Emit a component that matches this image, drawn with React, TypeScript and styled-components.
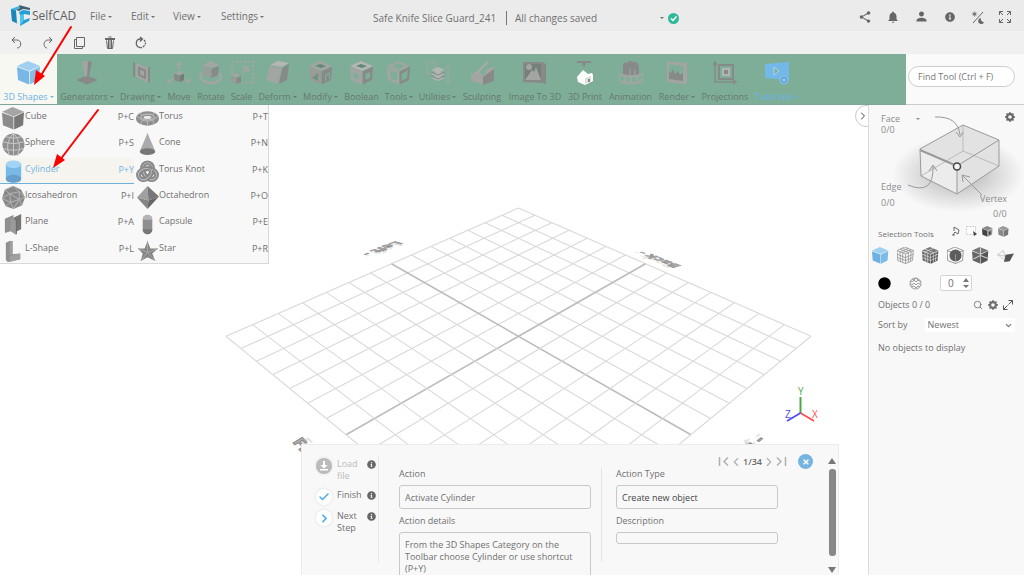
import React from "react";
import styled, { createGlobalStyle } from "styled-components";
import { MdShare, MdNotifications, MdPerson } from "react-icons/md";
import { FaInfoCircle, FaTimes } from "react-icons/fa";
import { BsGearFill } from "react-icons/bs";
import { Search, ChevronDown, ChevronLeft, ChevronRight, Check } from "lucide-react";

const GlobalStyle = createGlobalStyle`
  * { box-sizing: border-box; }
  body {
    margin: 0;
    background: #fff;
    color: #707070;
    font: 9px/12px "Open Sans", "Noto Sans", sans-serif;
  }
  button, input, select, textarea { font: inherit; color: inherit; margin: 0; }
  button { background: none; border: 0; padding: 0; cursor: pointer; }
  svg { display: block; flex: none; }
`;

const Page = styled.div`
  position: relative;
  min-height: 100vh;
  display: flex;
  flex-direction: column;
  overflow: hidden;
`;

const Caret = styled.span`
  display: inline-block;
  border: 2px solid transparent;
  border-top-color: currentColor;
  border-bottom: 0;
  margin-left: 2px;
  vertical-align: 2px;
`;

/* ---------- header ---------- */

const Header = styled.header`
  height: 31px;
  display: grid;
  grid-template-columns: 373px 1fr auto;
  background: #ebebeb;
  font-size: 10px;
  line-height: 14px;
`;

const MenuBar = styled.nav`
  display: flex;
  align-items: center;
  padding-left: 11px;
`;

const Logo = styled.a`
  display: flex;
  align-items: center;
  gap: 2px;
  width: 79px;
  color: #5f5f5f;
  font-size: 12px;
  text-decoration: none;
`;

const MenuButton = styled.button<{ $w: number }>`
  width: ${(p) => p.$w}px;
  text-align: left;
  white-space: nowrap;
`;

const Title = styled.div`
  display: flex;
  align-items: center;
  padding-top: 5px;
  white-space: nowrap;
`;

const ProjectName = styled.span`
  width: 134px;
  border-right: 1px solid #777;
`;

const SaveState = styled.button`
  display: flex;
  align-items: center;
  justify-content: space-between;
  width: 157px;
  padding-left: 8px;
  margin-right: 4px;
`;

const HeaderIcons = styled.div`
  display: flex;
  align-items: center;
  gap: 14px;
  padding: 2px 13px 0 0;
  color: #666;
`;

const InfoButton = styled.button`
  padding: 0 2px;
`;

const QuickBar = styled.div`
  height: 23px;
  display: flex;
  align-items: center;
  gap: 17px;
  padding-left: 10px;
  background: #f0f0f0;
  color: #666;
`;

/* ---------- ribbon ---------- */

const Ribbon = styled.div`
  height: 51px;
  display: flex;
  background: #7fae98;
  border-bottom: 1px solid #7aa893;
`;

const Tool = styled.button<{ $w: number; $active?: boolean; $blue?: boolean }>`
  width: ${(p) => p.$w}px;
  display: flex;
  flex-direction: column;
  align-items: center;
  gap: 6px;
  padding-top: 7px;
  white-space: nowrap;
  color: ${(p) => (p.$active ? "#70b2e2" : p.$blue ? "#64b2ea" : "#66786f")};
  background: ${(p) => (p.$active ? "#f8f8f3" : "transparent")};
`;

const FinderBox = styled.div`
  margin: 0 0 -1px auto;
  width: 118px;
  padding: 12px 9px 0 2px;
  background: #fafafa;
  border-bottom: 1px solid #ccc;
`;

const Finder = styled.input`
  width: 100%;
  height: 21px;
  padding: 0 9px;
  background: #fff;
  border: 1px solid #ccc;
  border-radius: 11px;
  &::placeholder { color: #777; opacity: 1; }
`;

/* ---------- workspace ---------- */

const Workspace = styled.main`
  flex: 1;
  display: grid;
  grid-template-columns: 1fr 156px;
`;

const Viewport = styled.section`
  position: relative;
  overflow: hidden;
  background: #fff;
`;

const Scene = styled.svg`
  width: 100%;
  height: 100%;
  position: absolute;
  inset: 0;
`;

const ShapeMenu = styled.div`
  position: absolute;
  left: 0;
  top: -1px;
  width: 269px;
  height: 160px;
  display: grid;
  grid-template-columns: 134px 134px;
  grid-template-rows: repeat(6, 1fr);
  grid-auto-flow: column;
  background: #f8f8f8;
  border: 1px solid #d9d9d9;
  border-left: 0;
`;

const ShapeItem = styled.button<{ $active?: boolean }>`
  display: flex;
  align-items: flex-start;
  padding: 2px 0 0 2px;
  text-align: left;
  color: ${(p) => (p.$active ? "#76b4e2" : "#707070")};
  background: ${(p) => (p.$active ? "#f5f4ef" : "transparent")};
  box-shadow: ${(p) => (p.$active ? "inset 0 -1px #6fb0dd" : "none")};
`;

const ShapeName = styled.span`
  flex: 1;
  padding-top: 3px;
`;

const Shortcut = styled.span`
  padding-top: 4px;
`;

const Collapse = styled.button`
  position: absolute;
  right: -10px;
  top: 0;
  width: 23px;
  height: 22px;
  padding-left: 1px;
  border: 1px solid #ccc;
  border-radius: 11px;
  background: #fff;
  color: #444;
`;

/* ---------- lesson panel ---------- */

const Lesson = styled.section`
  position: absolute;
  left: 301px;
  right: 29px;
  bottom: 0;
  height: 131px;
  display: flex;
  padding-left: 14px;
  overflow: hidden;
  background: #f8f8f8;
  border: 1px solid #ececec;
  border-bottom: 0;
`;

const Steps = styled.div`
  width: 63px;
  height: 107px;
  margin-top: 10px;
  padding-top: 3px;
  display: flex;
  flex-direction: column;
  gap: 5px;
  border-right: 1px solid #e8e8e8;
`;

const Step = styled.button<{ $muted?: boolean }>`
  display: grid;
  grid-template-columns: 16px 25px 10px;
  column-gap: 5px;
  align-items: start;
  min-height: ${(p) => (p.$muted ? 26 : 16)}px;
  text-align: left;
  color: ${(p) => (p.$muted ? "#bbb" : "#707070")};
  & > svg { margin-top: 2px; color: #666; }
`;

const Round = styled.span<{ $fill?: string }>`
  width: 16px;
  height: 16px;
  display: grid;
  place-items: center;
  border-radius: 50%;
  color: ${(p) => (p.$fill ? "#fff" : "#4aa8e6")};
  background: ${(p) => p.$fill || "#fff"};
  box-shadow: 0 0 3px #ddd;
`;

const Column = styled.div<{ $w: number; $left: number }>`
  width: ${(p) => p.$w}px;
  margin: 23px 0 0 ${(p) => p.$left}px;
  display: flex;
  flex-direction: column;
`;

const Field = styled.label`
  display: flex;
  flex-direction: column;
  gap: 5px;
  margin-bottom: 6px;
`;

const TextBox = styled.input<{ $h: number; $strong?: boolean }>`
  width: 100%;
  height: ${(p) => p.$h}px;
  padding: 0 5px;
  background: transparent;
  border: 1px solid #c8c8c8;
  border-radius: 3px;
  font-weight: ${(p) => (p.$strong ? 500 : 400)};
  color: ${(p) => (p.$strong ? "#444" : "#707070")};
`;

const Details = styled.textarea`
  width: 100%;
  height: 54px;
  padding: 6px 5px;
  resize: none;
  overflow: hidden;
  background: transparent;
  border: 1px solid #c8c8c8;
  border-radius: 3px;
`;

const Divider = styled.div`
  width: 1px;
  height: 95px;
  margin: 22px 0 0 10px;
  background: #e4e4e4;
`;

const Pager = styled.div`
  position: absolute;
  right: 25px;
  top: 9px;
  display: flex;
  align-items: center;
  color: #b0b0b0;
`;

const PageCount = styled.span`
  font-weight: 600;
  color: #6a6a6a;
`;

const Close = styled.button`
  width: 15px;
  height: 15px;
  margin-left: 11px;
  display: grid;
  place-items: center;
  border-radius: 50%;
  color: #fff;
  background: #76b4e2;
`;

const ScrollTrack = styled.div`
  position: absolute;
  right: 2px;
  top: 13px;
  bottom: 0;
  width: 8px;
  display: flex;
  flex-direction: column;
  align-items: center;
  gap: 5px;
`;

const Thumb = styled.div`
  width: 7px;
  height: 87px;
  margin-bottom: 6px;
  border-radius: 3px;
  background: #888;
`;

const Triangle = styled.span<{ $down?: boolean }>`
  border: 4px solid transparent;
  border-${(p) => (p.$down ? "top" : "bottom")}: 6px solid #777;
  border-${(p) => (p.$down ? "bottom" : "top")}: 0;
`;

/* ---------- sidebar ---------- */

const Sidebar = styled.aside`
  display: flex;
  flex-direction: column;
  padding-left: 9px;
  background: #f8f8f8;
  border-left: 1px solid #dcdcdc;
`;

const Picker = styled.div`
  position: relative;
  height: 116px;
  margin-left: -9px;
  color: #8c8c8c;
`;

const PickerLabel = styled.button<{ $x: number; $y: number }>`
  position: absolute;
  left: ${(p) => p.$x}px;
  top: ${(p) => p.$y}px;
  text-align: left;
`;

const Settings = styled.button`
  position: absolute;
  right: 9px;
  top: 7px;
  color: #666;
`;

const Line = styled.div<{ $h: number; $gap?: number }>`
  height: ${(p) => p.$h}px;
  display: flex;
  align-items: center;
  gap: ${(p) => p.$gap || 0}px;
`;

const ModeLine = styled(Line)`
  margin-left: -6px;
`;

const Small = styled.span`
  width: 68px;
  padding-top: 5px;
  font-size: 8px;
`;

const Grow = styled.span`
  flex: 1;
`;

const CountBox = styled.div`
  position: relative;
`;

const Count = styled.input`
  width: 32px;
  height: 16px;
  padding: 0 0 0 7px;
  background: #fff;
  border: 1px solid #d4d4d4;
  border-radius: 2px;
  font-size: 10px;
`;

const Spin = styled.svg`
  position: absolute;
  right: 3px;
  top: 3px;
`;

const SelectBox = styled.div`
  position: relative;
  margin-left: 17px;
`;

const Select = styled.select`
  width: 90px;
  height: 14px;
  padding: 0 3px;
  appearance: none;
  background: #fff;
  border: 0;
`;

const SelectArrow = styled(ChevronDown)`
  position: absolute;
  right: 2px;
  top: 3px;
  pointer-events: none;
`;

const Pointers = styled.svg`
  position: absolute;
  left: 0;
  top: 0;
  pointer-events: none;
`;

/* ---------- drawings ---------- */

const P = ({ d, f, s, w = 1 }: { d: string; f?: string; s?: string; w?: number }) => (
  <path d={d} fill={f || "none"} stroke={s} strokeWidth={s ? w : undefined} />
);

const Icon24 = ({ children, size = 24 }: { children: React.ReactNode; size?: number }) => (
  <svg width={size} height={size} viewBox="0 0 24 24">
    {children}
  </svg>
);

const cubeTop = "M0 5L11 0L23 5L12 10Z";
const cubeLeft = "M0 6L12 10.5V23.5L1 19Z";
const cubeRight = "M12.7 10.5L23 5.6L22 19L12.7 23.5Z";

const Cube = ({ c }: { c: [string, string, string] }) => (
  <>
    <P d={cubeTop} f={c[0]} />
    <P d={cubeLeft} f={c[1]} />
    <P d={cubeRight} f={c[2]} />
  </>
);

const A = "#a3a5a3";
const B = "#878a88";
const G = "#7fae98";

const ribbonArt: Record<string, React.ReactNode> = {
  "3D Shapes": <Cube c={["#9fd0f2", "#78b7e5", "#86c0ea"]} />,
  Generators: (
    <>
      <P d="M7 1Q12-1 17 1L15 10L14 16H10L9 10Z" f={A} />
      <P d="M13 0L17 1L15 10L14 16H12Z" f={B} />
      <P d="M1 19L9 15.500H14L23 19L12 23.500Z" f={B} />
    </>
  ),
  Drawing: (
    <>
      <P d="M4 1L6 2V17L4 15Z" f={B} />
      <P d="M7 2L19 7V22L7 16Z" f={A} />
      <P d="M10 7L16 9.500V17L10 14Z" s={B} w={2} />
      <P d="M19 7L21 6V21L19 22Z" f={B} />
    </>
  ),
  Move: (
    <>
      <P d="M12 0L15 4H13V8H11V4H9Z" f={A} />
      <P d="M7 12L12 10L17 12L12 14Z" f={A} />
      <P d="M7 12.500L12 14.500V21L7 19Z" f={B} />
      <P d="M12.500 14.500L17 12.500V19L12.500 21Z" f="#777c79" />
      <P d="M0 22L1 17L5 22ZM24 22L23 17L19 22Z" f={A} />
      <P d="M2 21L6 18M22 21L18 18" s={A} w={2} />
    </>
  ),
  Rotate: (
    <>
      <P d="M4 4L12 0L20 4L12 7Z" f={A} />
      <P d="M4 5L12 8V17L5 14Z" f="#9a9d9b" />
      <P d="M12.500 8L20 5L19 14L12.500 17Z" f={B} />
      <P d="M3 12C-1 16 4 22 12 22S25 15 20 12" s={A} w={2.5} />
    </>
  ),
  Scale: (
    <>
      <path d="M2 1H23V22H2Z" fill="none" stroke={A} strokeWidth="2" strokeDasharray="2 2" />
      <P d="M0 14L6 12L12 14V22L6 24L0 22Z" f={G} />
      <P d="M1 14L6 12L11 14L6 16Z" f={A} />
      <P d="M1 15L6 17V23L1 21Z" f="#999" />
      <P d="M6.500 17L11 15V21L6.500 23Z" f={B} />
      <P d="M12 12L17 7M13 6H18V11" s={A} w={2} />
    </>
  ),
  Deform: (
    <>
      <P d="M4 4L12 0L23 2L16 6Z" f="#b5b6b4" />
      <P d="M4 5L15.500 7L12 23L0 19Z" f={A} />
      <P d="M16.500 7L23 3L21 19L13 23Z" f={B} />
    </>
  ),
  Modify: (
    <>
      <Cube c={[A, "#999b99", B]} />
      <P d="M6 5L11 3L17 5L12 7Z" f="#5f8a76" />
      <P d="M3 17L9 12V20Z" f="#6b9481" />
      <P d="M16 14L21 11V18L16 20Z" f={G} />
      <P d="M17 15L20 13V19L17 21Z" f={B} />
    </>
  ),
  Boolean: (
    <>
      <Cube c={["#b5b6b4", A, B]} />
      <P d="M6 5L11 3L17 5L12 7Z" f="#5f8a76" />
      <P d="M3.500 11L8.500 13V19L3.500 17Z" f={G} />
      <P d="M15.500 13L20 11V17L15.500 19Z" f={G} />
    </>
  ),
  Tools: (
    <>
      <Cube c={[A, A, B]} />
      <P d="M5 5L11 2L18 5L12 8Z" f={G} />
      <P d="M3 9L10 12V20L3 17Z" f={G} />
      <P d="M14.500 13L21 9L20 17L14.500 20Z" f={G} />
    </>
  ),
  Utilities: (
    <>
      <P d="M1 2L9 0V9L1 13Z" s={A} />
      <P d="M5 9L12 6L19 9L12 12ZM5 13L12 10.500L19 13L12 16ZM5 17L12 14.500L19 17L12 20Z" f="#b3b5b3" />
      <P d="M5 11L12 14L19 11M5 15L12 18L19 15" s={B} />
      <P d="M22 5V22M20 7L22 4.500L24 7M20 20L22 22.500L24 20" s={A} />
    </>
  ),
  Sculpting: (
    <>
      <P d="M1 13L8 10L14 15L16 9L24 5V19L13 23L1 20Z" f={A} />
      <P d="M13 16L24 8V20L13 24Z" f={B} />
      <P d="M6 13L18 0" s="#aaa" w={2} />
    </>
  ),
  "Image To 3D": (
    <>
      <P d="M0 1H19L23 3V23L19 22L0 21Z" f={B} />
      <P d="M2 3H18V19H2Z" f="#748179" />
      <circle cx="6" cy="6" r="3" fill={A} />
      <P d="M2 19L9 9L11 11L13 6L18 19Z" f={A} />
    </>
  ),
  "3D Print": (
    <>
      <P d="M4 0H18V2H13L11 7L9 2H4Z" f={B} />
      <P d="M4 16L10 9L15 13L19 12L20 14V20L12 24L5 21Z" f="#fff" />
      <P d="M12 17L18 15V20L12 23Z" f="#ddd" />
      <P d="M15 18H17V21H15Z" f={B} />
    </>
  ),
  Animation: (
    <>
      <P d="M4 14V5Q4 0 8 2Q11-2 14 1Q20-1 20 8V15Z" f={B} />
      <P d="M11 14V8M16 14V9" s={A} />
      <P d="M0 13Q12 18 24 13V20Q12 25 0 20Z" s={A} w={2} />
      <P d="M6 15V22M12 16V23M18 15V22" s={A} w={2} />
    </>
  ),
  Render: (
    <>
      <P d="M2 0L19 2L22 1V22L19 23L2 21Z" f={A} />
      <P d="M4 3L18 5V20L4 18Z" f={G} />
      <P d="M4 10L6 12L8 8L10 13L13 10L15 14L18 12V20L4 18Z" f={B} />
    </>
  ),
  Projections: (
    <>
      <P d="M2 1V21H23M0 4L2 1L4 4M20 19L23 21L20 23" s={B} w={1.5} />
      <P d="M6 4H20V18H6Z" s={B} w={2} />
      <P d="M9 7H17V15H9Z" f="#b3b5b3" />
      <P d="M11 9H15V13H11Z" f={B} />
    </>
  ),
  Tutorials: (
    <>
      <P d="M0 3L24 1V19L0 17Z" f="#74b8ea" />
      <P d="M9 6L14 10L9 14Z" f="#7fae98" stroke="#a9d4f0" />
      <P d="M9 6L14 10L9 14Z" s="#a9d4f0" />
      <circle cx="19" cy="19" r="4" fill="#5fa5d8" stroke="#8fc4ea" />
      <P d="M19 17V21M17 19H21" s="#a5d0ee" />
    </>
  ),
};

const D = "#777";
const M = "#8f8f8f";
const L = "#b5b5b5";

const shapeArt: Record<string, React.ReactNode> = {
  Cube: <Cube c={["#a5a5a5", "#8b8b8b", "#777"]} />,
  Sphere: (
    <>
      <circle cx="12" cy="12" r="11.500" fill={M} />
      <P d="M1 9Q12 13 23 9M1 16Q12 20 23 16M4 4Q12 7 20 4M12 0V24M12 0Q2 11 8 24M12 0Q22 11 16 24" s="#c9c9c9" />
    </>
  ),
  Cylinder: (
    <>
      <P d="M4 5V20C4 25 20 25 20 20V5Z" f="#79b9e8" />
      <ellipse cx="12" cy="4.500" rx="8" ry="4" fill="#a3d4f5" />
      <ellipse cx="12" cy="19.500" rx="8" ry="4" fill="#669fca" />
    </>
  ),
  Icosahedron: (
    <>
      <P d="M12 0L20 4L24 12L21 20L12 24L4 21L0 13L3 4Z" f="#888" />
      <P d="M12 0L3 4L8 8L18 6L12 0M8 8L0 13L9 17L8 8L18 14L18 6L24 12L18 14L9 17L12 24L18 14L21 20M9 17L4 21" s="#b5b5b5" />
    </>
  ),
  Plane: (
    <>
      <P d="M3 7L12 3V19L3 22Z" f={M} />
      <P d="M12 6L20 2V18L12 22Z" f={D} />
      <P d="M9 6L15 9V24L9 20Z" f="#9a9a9a" />
      <P d="M15 8V23" s="#666" />
    </>
  ),
  "L-Shape": (
    <>
      <P d="M4 4L8 2H11V16L19 15V21L6 24L4 22Z" f={M} />
      <P d="M8 3L11 2V16L8 17ZM8 18L19 15V21L8 24Z" f="#a0a0a0" />
    </>
  ),
  Torus: (
    <>
      <ellipse cx="12" cy="12" rx="12" ry="7.500" fill={M} />
      <ellipse cx="12" cy="10.500" rx="7" ry="3" fill="none" stroke="#c9c9c9" />
      <ellipse cx="12" cy="11" rx="4" ry="1.500" fill="#eee" />
      <P d="M1 10Q12 20 23 10M7 13L5 18M12 14V19M17 13L19 18M6 8L3 6M17 8L20 6" s="#b9b9b9" />
    </>
  ),
  Cone: (
    <>
      <P d="M12 0L20 19H4Z" f="#aaa" />
      <ellipse cx="12" cy="19.500" rx="8" ry="3.500" fill={D} />
    </>
  ),
  "Torus Knot": (
    <>
      {[0, 120, 240].map((r) => (
        <g key={r} transform={`rotate(${r} 12 13)`}>
          <P d="M12 18C5 14 5 3 12 3S19 14 12 18" s="#888" w={5} />
          <P d="M12 18C5 14 5 3 12 3S19 14 12 18" s="#bbb" />
        </g>
      ))}
    </>
  ),
  Octahedron: (
    <>
      <P d="M12 0L1 12L13 15Z" f="#a0a0a0" />
      <P d="M12 0L24 11L13 15Z" f="#777" />
      <P d="M1 12L13 15L12 24Z" f="#858585" />
      <P d="M24 11L13 15L12 24Z" f="#666" />
    </>
  ),
  Capsule: (
    <>
      <rect x="7" y="3" width="10" height="20" rx="5" fill={M} />
      <P d="M7 8C7 1 17 1 17 8Z" f={L} />
      <P d="M7 18C7 25 17 25 17 18Z" f={D} />
    </>
  ),
  Star: (
    <>
      <P d="M12 2L15 10L23 10L17 15L20 23L12 19L5 23L7 15L2 10H9Z" f="#858585" />
      <P d="M12 14L12 2M12 14L23 10M12 14L20 23M12 14L5 23M12 14L2 10" s="#aaa" />
    </>
  ),
};

const solid: [string, string, string] = ["#777", "#666", "#555"];

const tools: [string, number, boolean?][] = [
  ["3D Shapes", 57, true],
  ["Generators", 60, true],
  ["Drawing", 47, true],
  ["Move", 30],
  ["Rotate", 34],
  ["Scale", 27],
  ["Deform", 45, true],
  ["Modify", 41, true],
  ["Boolean", 41],
  ["Tools", 34, true],
  ["Utilities", 43, true],
  ["Sculpting", 46],
  ["Image To 3D", 60],
  ["3D Print", 40],
  ["Animation", 51],
  ["Render", 42, true],
  ["Projections", 54],
  ["Tutorials", 49, true],
];

const shapes: [string, string][] = [
  ["Cube", "P+C"],
  ["Sphere", "P+S"],
  ["Cylinder", "P+Y"],
  ["Icosahedron", "P+I"],
  ["Plane", "P+A"],
  ["L-Shape", "P+L"],
  ["Torus", "P+T"],
  ["Cone", "P+N"],
  ["Torus Knot", "P+K"],
  ["Octahedron", "P+O"],
  ["Capsule", "P+E"],
  ["Star", "P+R"],
];

/* Projects a floor point (u, v in -1..1) onto the viewport. */
const project = (u: number, v: number) => {
  const s = (u + v) / 2;
  const d = (u - v) / 2;
  const w = 1 - 0.303 * s;
  return `${(518.5 + (292.5 * d) / w).toFixed(1)} ${(231.3 + (167 * s) / w).toFixed(1)}`;
};

const gridLines = Array.from({ length: 15 }, (_, i) => i / 7 - 1);

const floorLabels = [
  ["Left -", "matrix(-1.35 .5 -1.1 -.3 396 136)"],
  ["Back -", "matrix(-1.28 -.5 1.1 -.3 682 161)"],
  ["Front -", "matrix(1.1 1.2 -1.3 .8 292 337)"],
  ["Right -", "matrix(1.3 -1.1 1.4 .7 724 370)"],
];

const Floor = () => (
  <Scene viewBox="0 0 868 470" preserveAspectRatio="xMidYMin meet">
    {gridLines.map((t, i) => (
      <path
        key={i}
        d={`M${project(t, -1)}L${project(t, 1)}M${project(-1, t)}L${project(1, t)}`}
        stroke={i === 7 ? "#bcbcbc" : "#d9d9d9"}
        strokeWidth={i === 7 ? 1.6 : 1.1}
      />
    ))}
    {floorLabels.map(([t, m]) => (
      <g key={t} transform={m} fontSize="10" fontWeight="700">
        <text x="2" y="-3" fill="#e4e4e4">{t}</text>
        <text fill="#b5b5b5" stroke="#858585" strokeWidth=".6">{t}</text>
      </g>
    ))}
    <g fill="none" strokeWidth="2">
      <path d="M800.500 308V292" stroke="#4aa84a" />
      <path d="M800.500 308L814 316" stroke="#ff5050" />
      <path d="M800.500 308L787 316" stroke="#5050f0" />
    </g>
    <g fontSize="10">
      <text x="798" y="290" fill="#4aa84a">Y</text>
      <text x="812" y="313" fill="#ff5050">X</text>
      <text x="785" y="313" fill="#5050f0">Z</text>
    </g>
  </Scene>
);

const PickerArt = () => (
  <svg width="155" height="116" viewBox="869 105 155 116">
    <defs>
      <radialGradient id="shade">
        <stop offset="0" stopColor="#b0b0b0" />
        <stop offset=".6" stopColor="#dcdcdc" />
        <stop offset="1" stopColor="#f8f8f8" />
      </radialGradient>
    </defs>
    <ellipse cx="958" cy="174" rx="66" ry="38" fill="url(#shade)" />
    <path d="M920 149L963 125L999 140V166L957 194L921 176Z" fill="#e2e2e2" />
    <path d="M920 149L957 166V194L921 176Z" fill="#ececec" />
    <g fill="none" stroke="#999" strokeLinejoin="round">
      <path d="M963 126V151M963 151L921 176M963 151L999 166" stroke="#bbb" />
      <path d="M920 149L963 125L999 140V166L957 194L921 176ZM957 166L999 140M957 166V194" />
      <path d="M920 150L957 166" strokeWidth="2" />
      <path d="M935 117Q958 116 960 135M956 132L960 137L963 132" />
      <path d="M908 185Q934 196 933 166M929 171L933 165L937 171" />
      <path d="M982 195L963 176M963 182L962 175L970 177" />
    </g>
    <circle cx="957" cy="166.500" r="3.500" fill="#f4f4f4" stroke="#444" strokeWidth="1.500" />
  </svg>
);

const ExpandCorners = () => (
  <svg width="12" height="12" viewBox="0 0 12 12" fill="none" stroke="currentColor">
    <path d="M.5 4V.5H4M.5 .5L4 4M8 .5H11.500V4M11.500 .5L8 4M.5 8V11.500H4M.5 11.500L4 8M8 11.500H11.500V8M11.500 11.500L8 8" />
  </svg>
);

export default function App() {
  return (
    <Page>
      <GlobalStyle />
      <Header>
        <MenuBar>
          <Logo href="#">
            <svg width="19" height="21" viewBox="0 0 19 21">
              <path d="M0 4L8 1L10 2L5 5V17L7 19L1 16Z" fill="#39b5e6" />
              <path d="M0 4L5 6L6 18L1 16Z" fill="#1b87b9" />
              <path d="M8 7L12 5L19 6V10L13 9V15L19 13L18 16L9 21V10Z" fill="#229fd3" />
              <path d="M8 0L19 3L19 5L12 4L8 6L5 5L9 3Z" fill="#3f5f70" />
              <path d="M9 10L13 9V15L9 21Z" fill="#4cc4ee" />
            </svg>
            SelfCAD
          </Logo>
          <MenuButton $w={41}>File<Caret /></MenuButton>
          <MenuButton $w={42}>Edit<Caret /></MenuButton>
          <MenuButton $w={48}>View<Caret /></MenuButton>
          <MenuButton $w={50}>Settings<Caret /></MenuButton>
        </MenuBar>
        <Title>
          <ProjectName>Safe Knife Slice Guard_241</ProjectName>
          <SaveState>All changes saved<Caret /></SaveState>
          <svg width="11" height="11" viewBox="0 0 11 11">
            <circle cx="5.500" cy="5.500" r="5.500" fill="#2fb99a" />
            <path d="M3 5.500L5 7.500L8.500 3.500" fill="none" stroke="#fff" strokeWidth="1.500" />
          </svg>
        </Title>
        <HeaderIcons>
          <button aria-label="Share"><MdShare size={14} /></button>
          <button aria-label="Notifications"><MdNotifications size={14} /></button>
          <button aria-label="Account"><MdPerson size={15} /></button>
          <InfoButton aria-label="Info"><FaInfoCircle size={10} /></InfoButton>
          <button aria-label="Theme">
            <svg width="14" height="14" viewBox="0 0 14 14">
              <path d="M12 2L2 13" stroke="#666" />
              <circle cx="3.500" cy="4" r="1.500" fill="#666" />
              <path d="M3.500 1V7M0.500 4H6.500M1.500 2L5.500 6M5.500 2L1.500 6" stroke="#777" strokeWidth=".5" />
              <path d="M10 8A3 3 0 1 0 13 12A3 3 0 0 1 10 8Z" fill="#666" />
            </svg>
          </button>
          <button aria-label="Full screen"><ExpandCorners /></button>
        </HeaderIcons>
      </Header>

      <QuickBar>
        <button aria-label="Undo">
          <svg width="14" height="14" viewBox="0 0 14 14" fill="none" stroke="#666">
            <path d="M2 4H7C12 4 12 12 7 12M5 1L2 4L5 7" />
          </svg>
        </button>
        <button aria-label="Redo">
          <svg width="14" height="14" viewBox="0 0 14 14" fill="none" stroke="#666">
            <path d="M11 4H7C2 4 2 12 6 12M8 1L11 4L8 7" />
          </svg>
        </button>
        <button aria-label="Copy">
          <svg width="14" height="14" viewBox="0 0 14 14" fill="none" stroke="#666">
            <path d="M4.500 1.500H12.500V10.500H4.500ZM4.500 3.500H2.500V12.500H10.500V10.500" />
          </svg>
        </button>
        <button aria-label="Delete">
          <svg width="14" height="14" viewBox="0 0 14 14" fill="none" stroke="#666">
            <path d="M5.500 1H8.500M3.500 4.500L4.500 12.500H9.500L10.500 4.500M5.500 4V12M7 4V12M8.500 4V12" />
            <path d="M2 3H12" strokeWidth="2" />
          </svg>
        </button>
        <button aria-label="Refresh">
          <svg width="14" height="14" viewBox="0 0 14 14" fill="none" stroke="#666">
            <path d="M6 11.500C1 11 1 3 6.500 3H8M6 1L8.500 3L6 5.500" strokeWidth="1.300" />
            <path d="M10 4Q13 7 10 10Q8 12 6 11.500" strokeDasharray="2 1" strokeWidth="1.300" />
          </svg>
        </button>
      </QuickBar>

      <Ribbon>
        {tools.map(([name, w, menu], i) => (
          <Tool key={name} $w={w} $active={i === 0} $blue={name === "Tutorials"}>
            <Icon24>{ribbonArt[name]}</Icon24>
            <span>{name}{menu && <Caret />}</span>
          </Tool>
        ))}
        <FinderBox>
          <Finder placeholder="Find Tool (Ctrl + F)" aria-label="Find Tool" />
        </FinderBox>
      </Ribbon>

      <Workspace>
        <Viewport>
          <Floor />
          <Collapse aria-label="Collapse sidebar"><ChevronRight size={12} /></Collapse>
          <ShapeMenu>
            {shapes.map(([name, key]) => (
              <ShapeItem key={name} $active={name === "Cylinder"}>
                <Icon24 size={23}>{shapeArt[name]}</Icon24>
                <ShapeName>{name}</ShapeName>
                <Shortcut>{key}</Shortcut>
              </ShapeItem>
            ))}
          </ShapeMenu>

          <Lesson>
            <Steps>
              <Step $muted>
                <Round $fill="#bbb">
                  <svg width="10" height="10" viewBox="0 0 10 10" fill="#fff">
                    <path d="M4 0H6V4H8.500L5 7.500L1.500 4H4ZM1 8H9V9.500H1Z" />
                  </svg>
                </Round>
                <span>Load<br />file</span>
                <FaInfoCircle size={9} />
              </Step>
              <Step>
                <Round><Check size={12} strokeWidth={3} /></Round>
                <span>Finish</span>
                <FaInfoCircle size={9} />
              </Step>
              <Step>
                <Round><ChevronRight size={13} strokeWidth={3} /></Round>
                <span>Next<br />Step</span>
                <FaInfoCircle size={9} />
              </Step>
            </Steps>
            <Column $w={192} $left={20}>
              <Field>Action<TextBox $h={24} defaultValue="Activate Cylinder" /></Field>
              <Field>
                Action details
                <Details defaultValue="From the 3D Shapes Category on the Toolbar choose Cylinder or use shortcut (P+Y)" />
              </Field>
            </Column>
            <Divider />
            <Column $w={162} $left={14}>
              <Field>Action Type<TextBox $h={24} $strong defaultValue="Create new object" /></Field>
              <Field>Description<TextBox $h={12} /></Field>
            </Column>
            <Pager>
              <button aria-label="First">
                <svg width="11" height="11" viewBox="0 0 11 11" fill="none" stroke="currentColor" strokeWidth="1.500">
                  <path d="M1.500 1V10M10 1.500L6 5.500L10 9.500" />
                </svg>
              </button>
              <button aria-label="Previous"><ChevronLeft size={14} /></button>
              <PageCount>1/34</PageCount>
              <button aria-label="Next"><ChevronRight size={14} /></button>
              <button aria-label="Last">
                <svg width="11" height="11" viewBox="0 0 11 11" fill="none" stroke="currentColor" strokeWidth="1.500">
                  <path d="M9.500 1V10M1 1.500L5 5.500L1 9.500" />
                </svg>
              </button>
              <Close aria-label="Close"><FaTimes size={8} /></Close>
            </Pager>
            <ScrollTrack>
              <Triangle />
              <Thumb />
              <Triangle $down />
            </ScrollTrack>
          </Lesson>
        </Viewport>

        <Sidebar>
          <Picker>
            <PickerArt />
            <PickerLabel $x={12} $y={8}>Face</PickerLabel>
            <PickerLabel $x={45} $y={8} aria-label="Face options"><Caret /></PickerLabel>
            <PickerLabel $x={12} $y={19}>0/0</PickerLabel>
            <PickerLabel $x={12} $y={76}>Edge</PickerLabel>
            <PickerLabel $x={12} $y={92}>0/0</PickerLabel>
            <PickerLabel $x={111} $y={88}>Vertex</PickerLabel>
            <PickerLabel $x={124} $y={103}>0/0</PickerLabel>
            <Settings aria-label="Settings"><BsGearFill size={10} /></Settings>
          </Picker>
          <Line $h={20} $gap={5}>
            <Small>Selection Tools</Small>
            <svg width="10" height="10" viewBox="0 0 10 10" fill="none" stroke="#666">
              <path d="M3 1L8 4L7 8L4 6L2 9M3 1V5M1 9H4" />
            </svg>
            <svg width="11" height="10" viewBox="0 0 11 10">
              <path d="M.5 .5H9.500V8.500H.5Z" fill="#fff" stroke="#ccc" strokeDasharray="2 1" />
              <path d="M7 5L11 8L8 10Z" fill="#444" />
            </svg>
            <Icon24 size={11}>
              <Cube c={["#888", "#444", "#999"]} />
              <P d="M15 14L19 10V17L15 20Z" f="#444" />
            </Icon24>
            <Icon24 size={11}><Cube c={["#999", "#888", "#777"]} /></Icon24>
          </Line>
          <ModeLine $h={28} $gap={8}>
            <Icon24 size={17}><Cube c={["#9fd0f2", "#6db1e2", "#7cbbe8"]} /></Icon24>
            <Icon24 size={17}>
              <P d="M0 5L11 0L23 5L12 10ZM0 5L1 19L12 23.500L22 19L23 5M12 10V23.500M4 7L5 21M8 8V22M16 8V22M20 7L19 20M0 10L12 15L23 10M1 15L12 19L22 15M4 3L16 8M8 2L20 6M16 2L4 7M20 4L8 8" s="#888" />
            </Icon24>
            <Icon24 size={17}>
              <Cube c={solid} />
              <P d="M4 7L5 21M8 8V22M16 8V22M20 7L19 20M0 10L12 15L23 10M1 15L12 19L22 15M4 3L16 8M16 2L4 7" s="#ddd" />
            </Icon24>
            <Icon24 size={17}>
              <P d={cubeTop + "M0 5L1 19L12 23.500L22 19L23 5"} s="#777" />
              <circle cx="12" cy="12" r="8.500" fill="#5c5c5c" />
              <P d="M12 10V23" s="#aaa" />
            </Icon24>
            <Icon24 size={17}>
              <Cube c={solid} />
              <P d="M12 0V12L2 17M12 12L22 16" s="#ccc" w={1.5} />
            </Icon24>
            <Icon24 size={17}>
              <P d="M1 11L9 5L13 20ZM1 11L12 13" s="#bbb" />
              <P d="M12 11L24 9L18 20L10 21Z" f="#555" />
            </Icon24>
          </ModeLine>
          <Line $h={28} $gap={18}>
            <svg width="13" height="13" viewBox="0 0 13 13"><circle cx="6.500" cy="6.500" r="6.200" /></svg>
            <svg width="13" height="13" viewBox="0 0 13 13">
              <g fill="none" stroke="#999">
                <circle cx="6.500" cy="6.500" r="5.500" />
                <path d="M1 4L3 5L5 3L7 5L9 3L12 5M1 7L3 8L5 6L7 8L9 6L12 8M2 10L5 9L7 11L9 9L11 10M3 2L5 3L7 1L9 3" />
              </g>
            </svg>
            <CountBox>
              <Count aria-label="Selection size" defaultValue="0" />
              <Spin width="6" height="10" viewBox="0 0 6 10" fill="#777"><path d="M0 4L3 0L6 4ZM0 7H6L3 10Z" /></Spin>
            </CountBox>
          </Line>
          <Line $h={16} $gap={5}>
            <span>Objects 0 / 0</span>
            <Grow />
            <button aria-label="Search objects"><Search size={10} /></button>
            <button aria-label="Object settings"><BsGearFill size={10} /></button>
            <button aria-label="Expand list">
              <svg width="21" height="10" viewBox="0 0 21 10" fill="none" stroke="#555">
                <path d="M5.500 .5H9.500V4.500M9.500 .5L5.500 4.500M.5 5.500V9.500H4.500M.5 9.500L4.500 5.500" />
              </svg>
            </button>
          </Line>
          <Line $h={24}>
            <label htmlFor="sort">Sort by</label>
            <SelectBox>
              <Select id="sort" defaultValue="Newest"><option>Newest</option></Select>
              <SelectArrow size={9} strokeWidth={3} />
            </SelectBox>
          </Line>
          <Line $h={22}>No objects to display</Line>
        </Sidebar>
      </Workspace>

      <Pointers width="110" height="180" viewBox="0 0 110 180">
        <path d="M71 27L40 77M98 110L60 160" stroke="#f00" strokeWidth="2" strokeLinecap="round" />
        <path d="M34 85L36 70L45 76ZM53 168L57 154L65 160Z" fill="#f00" />
      </Pointers>
    </Page>
  );
}
